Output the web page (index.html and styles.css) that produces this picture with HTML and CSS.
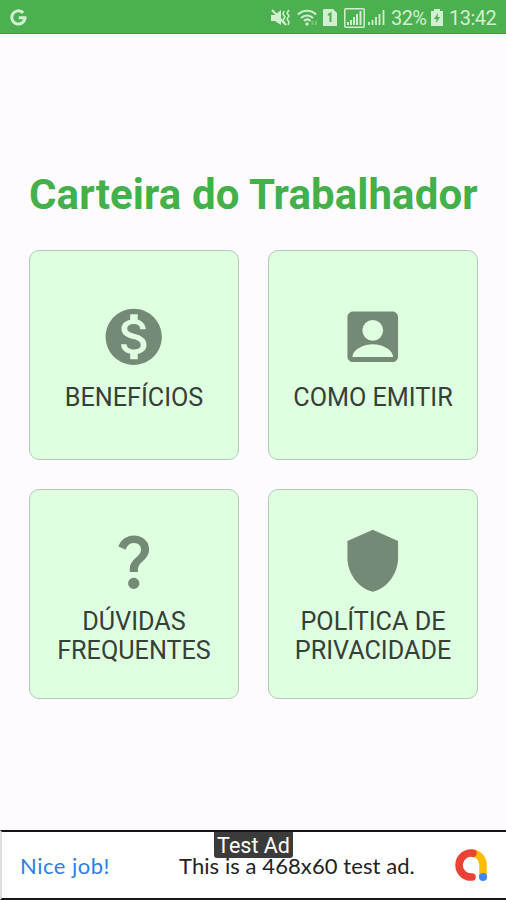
FILE: index.html
```html
<!DOCTYPE html>
<html lang="pt-BR">
<head>
  <meta charset="UTF-8">
  <meta name="viewport" content="width=device-width, initial-scale=1">
  <title>Carteira do Trabalhador</title>
  <link rel="stylesheet" href="styles.css">
</head>
<body>
  <div class="app">
    <header class="status-bar">
      <svg class="google" width="17" height="17" viewBox="0 0 17 17">
        <path d="M13.200 3.900A6.600 6.600 0 1 0 15 8.700H8.800" fill="none" stroke="currentColor" stroke-width="3"/>
      </svg>
      <div class="status-icons">
        <svg class="mute" width="20" height="18" viewBox="0 0 20 18">
          <path d="M0 6h4l6-5v15l-6-4H0z" fill="currentColor"/>
          <path d="M1 1l14 15" stroke="currentColor" stroke-width="2"/>
          <path d="M13 2l-1 3 2 3-2 3 2 4M18 1l-2 3 2 3-2 3 2 3-1 3" fill="none" stroke="currentColor" stroke-width="1.500"/>
        </svg>
        <svg class="wifi" width="22" height="18" viewBox="0 0 22 18">
          <path d="M1 5.500c5-5 13-5 18 0M4 9c3.500-3.500 8.500-3.500 12 0M7 12c2-2 4.500-2 6.500 0" fill="none" stroke="currentColor" stroke-width="2"/>
          <circle cx="10" cy="15" r="1.700" fill="currentColor"/>
          <path d="M15.500 12v4M19 12v4" stroke="currentColor" stroke-width="2" opacity=".35"/>
        </svg>
        <svg class="sim" width="14" height="17" viewBox="0 0 14 17">
          <path d="M1 0h9l4 4v13H0V1z" fill="currentColor"/>
          <path d="M5 6l2.500-1.500V13" fill="none" stroke="#4caf50" stroke-width="2"/>
        </svg>
        <svg class="signal-box" width="21" height="20" viewBox="0 0 21 20">
          <rect x=".8" y=".8" width="19.400" height="18.400" rx="1" fill="none" stroke="currentColor" stroke-width="1.500"/>
          <path d="M4 14v3M7 12v5M10 9v8M13 6v11M16.500 3v14" stroke="currentColor" stroke-width="2"/>
        </svg>
        <svg class="signal" width="17" height="17" viewBox="0 0 17 17">
          <path d="M1 13v3M4.500 11v5M8 8v8M11.500 5v11M15.500 1v15" stroke="currentColor" stroke-width="1.800"/>
        </svg>
        <span class="percent">32%</span>
        <svg class="battery" width="12" height="17" viewBox="0 0 12 17">
          <path d="M3 0h6v2h3v15H0V2h3z" fill="currentColor"/>
          <path d="M7 4L3 10h2.500L5 14l4-6H6.500z" fill="#4caf50"/>
        </svg>
        <span class="clock">13:42</span>
      </div>
    </header>

    <main class="content">
      <h1>Carteira do Trabalhador</h1>
      <div class="menu">
        <div class="card">
          <svg class="icon" viewBox="0 0 24 24"><path d="M12 2C6.480 2 2 6.480 2 12s4.480 10 10 10 10-4.480 10-10S17.520 2 12 2zm1.410 16.090V20h-2.670v-1.930c-1.710-.36-3.160-1.460-3.270-3.400h1.960c.1 1.050.82 1.870 2.650 1.870 1.960 0 2.400-.98 2.400-1.590 0-.83-.44-1.610-2.670-2.140-2.480-.6-4.180-1.620-4.180-3.670 0-1.720 1.390-2.840 3.110-3.210V4h2.670v1.950c1.860.45 2.790 1.860 2.850 3.390H14.300c-.05-1.110-.64-1.870-2.220-1.870-1.500 0-2.400.68-2.400 1.640 0 .84.65 1.390 2.670 1.910s4.180 1.390 4.180 3.910c-.01 1.830-1.380 2.830-3.120 3.160z"/></svg>
          <span class="label">BENEFÍCIOS</span>
        </div>
        <div class="card">
          <svg class="icon" viewBox="0 0 24 24"><path d="M3 5v14c0 1.100.89 2 2 2h14c1.100 0 2-.9 2-2V5c0-1.100-.9-2-2-2H5c-1.110 0-2 .9-2 2zm12.700 4.700a3.700 3.700 0 1 1-7.400 0 3.700 3.700 0 0 1 7.400 0zM4.800 19.200v-.4c.5-2.500 4.200-4.100 7.200-4.100s6.700 1.600 7.200 4.100v.4z"/></svg>
          <span class="label">COMO EMITIR</span>
        </div>
        <div class="card">
          <svg class="icon" viewBox="0 0 24 24"><path d="M11.070 12.850c.77-1.390 2.250-2.210 3.110-3.440.91-1.290.4-3.700-2.180-3.700-1.690 0-2.520 1.280-2.870 2.340L6.540 6.960C7.250 4.830 9.180 3 11.990 3c2.350 0 3.960 1.070 4.780 2.410.7 1.150 1.110 3.300.03 4.900-1.200 1.770-2.350 2.310-2.970 3.450-.25.46-.35.76-.35 2.240h-2.890c-.01-.78-.13-2.050.48-3.150zM14 20c0 1.100-.9 2-2 2s-2-.9-2-2 .9-2 2-2 2 .9 2 2z"/></svg>
          <span class="label">DÚVIDAS<br>FREQUENTES</span>
        </div>
        <div class="card">
          <svg class="icon" viewBox="0 0 24 24"><path d="M12 1L3 5v6c0 5.550 3.840 10.740 9 12 5.160-1.260 9-6.450 9-12V5l-9-4z"/></svg>
          <span class="label">POLÍTICA DE<br>PRIVACIDADE</span>
        </div>
      </div>
    </main>

    <footer class="ad">
      <span class="ad-title">Nice job!</span>
      <span class="ad-text">This is a 468x60 test ad.</span>
      <svg class="admob" width="34" height="34" viewBox="0 0 34 34">
        <path d="M18 5.200A11 12 0 0 1 29 16V28" fill="none" stroke="#fbbc04" stroke-width="7.500"/>
        <path d="M19 5.200A12 12 0 1 0 18 29" fill="none" stroke="#ea4335" stroke-width="7.500" stroke-linecap="round"/>
        <circle cx="29" cy="29" r="4" fill="#4285f4"/>
      </svg>
      <span class="ad-badge">Test Ad</span>
    </footer>
  </div>
</body>
</html>
```
FILE: styles.css
```css
* {
  box-sizing: border-box;
}
body {
  margin: 0;
  font-family: Roboto, sans-serif;
  background: #fefbff;
}
.app {
  height: 900px;
  display: flex;
  flex-direction: column;
}
.status-bar {
  height: 34px;
  padding: 2px 11px 0 10px;
  background: #4caf50;
  border-bottom: 1px solid #35a43b;
  color: #d0f0d0;
  display: flex;
  align-items: center;
  justify-content: space-between;
}
.status-icons {
  display: flex;
  align-items: center;
}
.wifi {
  margin-left: 6px;
}
.sim {
  margin-left: 4px;
}
.signal-box {
  margin-left: 7px;
}
.signal {
  margin-left: 3px;
}
.percent {
  width: 35px;
  margin-left: 6px;
  font-size: 20px;
  letter-spacing: -0.6px;
}
.battery {
  margin-left: 5px;
}
.clock {
  width: 46px;
  margin-left: 6px;
  font-size: 20px;
  letter-spacing: -0.5px;
}
.content {
  flex: 1;
  padding: 136px 28px 0 29px;
}
h1 {
  margin: 0;
  height: 80px;
  line-height: 50px;
  font-size: 42px;
  font-weight: 700;
  letter-spacing: 0.1px;
  color: #43b04a;
  white-space: nowrap;
}
.menu {
  display: grid;
  grid-template-columns: 210px 210px;
  grid-auto-rows: 210px;
  gap: 29px;
}
.card {
  display: flex;
  flex-direction: column;
  align-items: center;
  justify-content: center;
  padding-top: 5px;
  background: #dfffe1;
  border: 1px solid #b3c9b8;
  border-radius: 10px;
}
.icon {
  width: 67.500px;
  height: 67.500px;
  margin-bottom: 12px;
  fill: #758977;
}
.label {
  font-size: 25.200px;
  line-height: 29.500px;
  color: #364037;
  text-align: center;
  white-space: nowrap;
}
.ad {
  position: relative;
  height: 70px;
  padding: 0 18px 0 18px;
  background: #fff;
  border-top: 2px solid #151515;
  border-bottom: 2px solid #151515;
  border-left: 2px solid #ddd;
  display: flex;
  align-items: center;
  font-family: Lato, sans-serif;
  font-size: 22px;
}
.ad-title {
  width: 159px;
  letter-spacing: 0.5px;
  color: #2d7de8;
}
.ad-text {
  letter-spacing: 0.08px;
  color: #222;
  white-space: nowrap;
}
.admob {
  margin-left: auto;
}
.ad-badge {
  position: absolute;
  top: 0;
  left: 212px;
  width: 79px;
  height: 26px;
  line-height: 27px;
  background: #3b3b3b;
  color: #fff;
  font-family: Roboto, sans-serif;
  font-size: 21.500px;
  text-align: center;
  border-radius: 0 0 3px 3px;
}
```
